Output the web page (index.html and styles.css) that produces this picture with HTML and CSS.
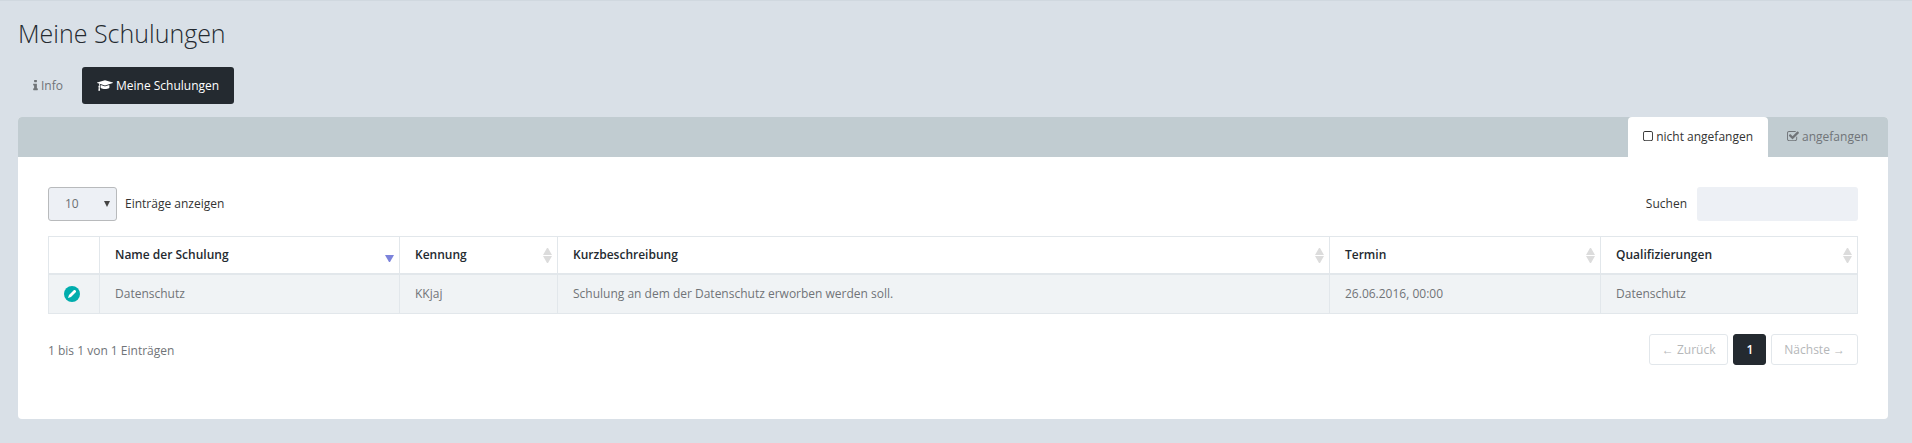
FILE: index.html
```html
<!DOCTYPE html>
<html lang="de">
<head>
    <meta charset="UTF-8">
    <meta name="viewport" content="width=device-width, initial-scale=1">
    <title>Meine Schulungen</title>
    <link rel="stylesheet" href="styles.css">
</head>
<body>
    <main class="page">
        <h1>Meine Schulungen</h1>

        <nav class="page-tabs">
            <a href="#info"><svg class="icon" viewBox="576 0 640 1792" width="5" height="13" aria-hidden="true"><path d="M1216 1344v128q0 26-19 45t-45 19h-512q-26 0-45-19t-19-45v-128q0-26 19-45t45-19h64v-384h-64q-26 0-45-19t-19-45v-128q0-26 19-45t45-19h384q26 0 45 19t19 45v576h64q26 0 45 19t19 45zm-128-1152v192q0 26-19 45t-45 19h-256q-26 0-45-19t-19-45v-192q0-26 19-45t45-19h256q26 0 45 19t19 45z"/></svg>Info</a>
            <a href="#schulungen" class="active"><svg class="icon" viewBox="0 0 2304 1792" width="16" height="13" aria-hidden="true"><path d="M1774 836l18 316q4 69-82 128t-235 93.500-323 34.500-323-34.500-235-93.500-82-128l18-316 574 181q22 7 48 7t48-7zm530-324q0 23-22 31l-1120 352q-4 1-10 1t-10-1l-652-206q-43 34-71 111.500t-34 178.500q63 36 63 109 0 69-58 107l58 433q2 14-8 25-9 11-24 11h-192q-15 0-24-11-10-11-8-25l58-433q-58-38-58-107 0-73 65-111 11-207 98-330l-333-104q-22-8-22-31t22-31l1120-352q4-1 10-1t10 1l1120 352q22 8 22 31z"/></svg>Meine Schulungen</a>
        </nav>

        <section class="panel">
            <div class="panel-tabs">
                <a href="#offen" class="active"><svg class="icon" viewBox="192 0 1408 1792" width="10" height="13" aria-hidden="true"><path d="M1312 256h-832q-66 0-113 47t-47 113v832q0 66 47 113t113 47h832q66 0 113-47t47-113v-832q0-66-47-113t-113-47zm288 160v832q0 119-84.500 203.500t-203.500 84.500h-832q-119 0-203.500-84.500t-84.500-203.500v-832q0-119 84.500-203.500t203.500-84.500h832q119 0 203.500 84.500t84.500 203.500z"/></svg>nicht angefangen</a>
                <a href="#begonnen"><svg class="icon" viewBox="64 0 1664 1792" width="12" height="13" aria-hidden="true"><path d="M1472 930v318q0 119-84.500 203.500t-203.500 84.500h-832q-119 0-203.500-84.500t-84.500-203.500v-832q0-119 84.500-203.500t203.500-84.500h832q63 0 117 25 15 7 18 23 3 17-9 29l-49 49q-10 10-23 10-3 0-9-2-23-6-45-6h-832q-66 0-113 47t-47 113v832q0 66 47 113t113 47h832q66 0 113-47t47-113v-254q0-13 9-22l64-64q10-10 23-10 6 0 12 3 20 8 20 29zm231-489l-814 814q-24 24-57 24t-57-24l-430-430q-24-24-24-57t24-57l110-110q24-24 57-24t57 24l263 263 647-647q24-24 57-24t57 24l110 110q24 24 24 57t-24 57z"/></svg>angefangen</a>
            </div>

            <div class="panel-body">
                <div class="toolbar">
                    <label class="length">
                        <span class="select-box">
                            <select>
                                <option>10</option>
                                <option>25</option>
                                <option>50</option>
                                <option>100</option>
                            </select>
                        </span>
                        Einträge anzeigen
                    </label>
                    <label class="search">Suchen <input type="search"></label>
                </div>

                <table>
                    <colgroup>
                        <col class="col-action">
                        <col class="col-name">
                        <col class="col-code">
                        <col class="col-text">
                        <col class="col-date">
                        <col class="col-quali">
                    </colgroup>
                    <thead>
                        <tr>
                            <td></td>
                            <th scope="col" aria-sort="descending"><button class="sort" type="button">Name der Schulung <svg class="sorted" viewBox="0 0 9 15" width="9" height="15" aria-hidden="true"><path d="M0 7h9l-4 7h-1z"/></svg></button></th>
                            <th scope="col"><button class="sort" type="button">Kennung <svg viewBox="0 0 9 15" width="9" height="15" aria-hidden="true"><path d="M0 7h9l-4-7h-1zM0 8h9l-4 7h-1z"/></svg></button></th>
                            <th scope="col"><button class="sort" type="button">Kurzbeschreibung <svg viewBox="0 0 9 15" width="9" height="15" aria-hidden="true"><path d="M0 7h9l-4-7h-1zM0 8h9l-4 7h-1z"/></svg></button></th>
                            <th scope="col"><button class="sort" type="button">Termin <svg viewBox="0 0 9 15" width="9" height="15" aria-hidden="true"><path d="M0 7h9l-4-7h-1zM0 8h9l-4 7h-1z"/></svg></button></th>
                            <th scope="col"><button class="sort" type="button">Qualifizierungen <svg viewBox="0 0 9 15" width="9" height="15" aria-hidden="true"><path d="M0 7h9l-4-7h-1zM0 8h9l-4 7h-1z"/></svg></button></th>
                        </tr>
                    </thead>
                    <tbody>
                        <tr>
                            <td><a class="edit" href="#bearbeiten" aria-label="Bearbeiten"><svg viewBox="0 0 16 16" width="16" height="16" aria-hidden="true"><circle cx="8" cy="8" r="8" fill="#00adad"/><path d="M4 12l1-3 4-4 2 2-4 4zM9 5l1-1h1l1 1v1l-1 1z" fill="#fff"/></svg></a></td>
                            <td>Datenschutz</td>
                            <td>KKjaj</td>
                            <td>Schulung an dem der Datenschutz erworben werden soll.</td>
                            <td>26.06.2016, 00:00</td>
                            <td>Datenschutz</td>
                        </tr>
                    </tbody>
                </table>

                <div class="table-footer">
                    <p>1 bis 1 von 1 Einträgen</p>
                    <div class="pagination">
                        <button type="button" disabled><span class="arrow">←</span> Zurück</button>
                        <button type="button" class="current">1</button>
                        <button type="button" disabled>Nächste <span class="arrow">→</span></button>
                    </div>
                </div>
            </div>
        </section>
    </main>
</body>
</html>
```
FILE: styles.css
```css
* {
    box-sizing: border-box;
}

body {
    margin: 0;
    background: #d9e0e7;
    border-top: 1px solid #d0d8df;
    color: #707478;
    font-family: "Open Sans", "Liberation Sans", sans-serif;
    font-size: 12px;
    line-height: 20px;
}

a {
    color: inherit;
    text-decoration: none;
}

button,
input,
select {
    font: inherit;
    color: inherit;
}

.page {
    padding: 16px 24px 22px 18px;
}

h1 {
    margin: 0 0 18px;
    color: #242a30;
    font-size: 25px;
    font-weight: 300;
    line-height: 32px;
}

.icon {
    margin-right: 3px;
    fill: currentColor;
    vertical-align: -2px;
}

/* page tabs */
.page-tabs {
    display: flex;
    gap: 4px;
    margin-bottom: 13px;
}

.page-tabs a {
    padding: 9px 15px 8px;
    border-radius: 3px;
}

.page-tabs .active {
    background: #242a30;
    color: #fff;
}

/* panel */
.panel {
    background: #fff;
    border-radius: 4px;
}

.panel-tabs {
    display: flex;
    justify-content: flex-end;
    background: #c1ccd1;
    border-radius: 4px 4px 0 0;
}

.panel-tabs a {
    padding: 10px 15px;
    border-radius: 4px 4px 0 0;
}

.panel-tabs a:last-child {
    padding: 10px 20px 10px 19px;
}

.panel-tabs .active {
    background: #fff;
    color: #333;
}

.panel-body {
    padding: 30px 30px 54px;
}

.toolbar {
    display: flex;
    justify-content: space-between;
    margin-bottom: 15px;
    color: #333;
}

.length,
.search {
    display: flex;
    align-items: center;
    gap: 8px;
}

.search {
    gap: 10px;
}

.select-box {
    position: relative;
}

.select-box::after {
    content: "";
    position: absolute;
    top: 14px;
    right: 7px;
    border: 3px solid transparent;
    border-top: 6px solid #444;
    border-bottom: 0;
    pointer-events: none;
}

select {
    display: block;
    width: 69px;
    height: 34px;
    padding: 0 16px;
    appearance: none;
    background: #edf0f5;
    border: 1px solid #b8babc;
    border-radius: 3px;
    color: #6b6f73;
}

.search input {
    width: 161px;
    height: 34px;
    padding: 6px 12px;
    background: #edf0f5;
    border: 0;
    border-radius: 3px;
}

/* table */
table {
    width: 100%;
    table-layout: fixed;
    border-collapse: collapse;
    border: 1px solid #e2e7eb;
}

.col-action { width: 51px; }
.col-name { width: 300px; }
.col-code { width: 158px; }
.col-date { width: 271px; }
.col-quali { width: 257px; }

th,
td {
    padding: 9px 15px;
    border: 1px solid #e2e7eb;
    text-align: left;
}

th {
    padding: 8px 5px 8px 15px;
    color: #242a30;
    font-weight: 600;
}

thead th,
thead td {
    border-bottom-width: 2px;
}

tbody tr {
    background: #f0f3f5;
}

.sort {
    display: flex;
    justify-content: space-between;
    align-items: center;
    width: 100%;
    padding: 0;
    background: none;
    border: 0;
    cursor: pointer;
}

.sort svg {
    fill: #dcdcdc;
}

.sort .sorted {
    fill: #7c83db;
}

.edit svg {
    display: block;
}

/* footer */
.table-footer {
    display: flex;
    justify-content: space-between;
    padding-top: 20px;
}

.table-footer p {
    margin: 0;
    padding-top: 7px;
}

.pagination {
    display: flex;
    gap: 5px;
}

.pagination button {
    height: 31px;
    padding: 0 12px;
    background: #fff;
    border: 1px solid #e2e7eb;
    border-radius: 3px;
    cursor: pointer;
}

.pagination button:disabled {
    color: #b5b7b9;
    cursor: default;
}

.pagination .current {
    background: #242a30;
    border-color: #242a30;
    color: #fff;
    font-weight: 600;
}

.arrow {
    font-family: "Liberation Sans", sans-serif;
}
```
